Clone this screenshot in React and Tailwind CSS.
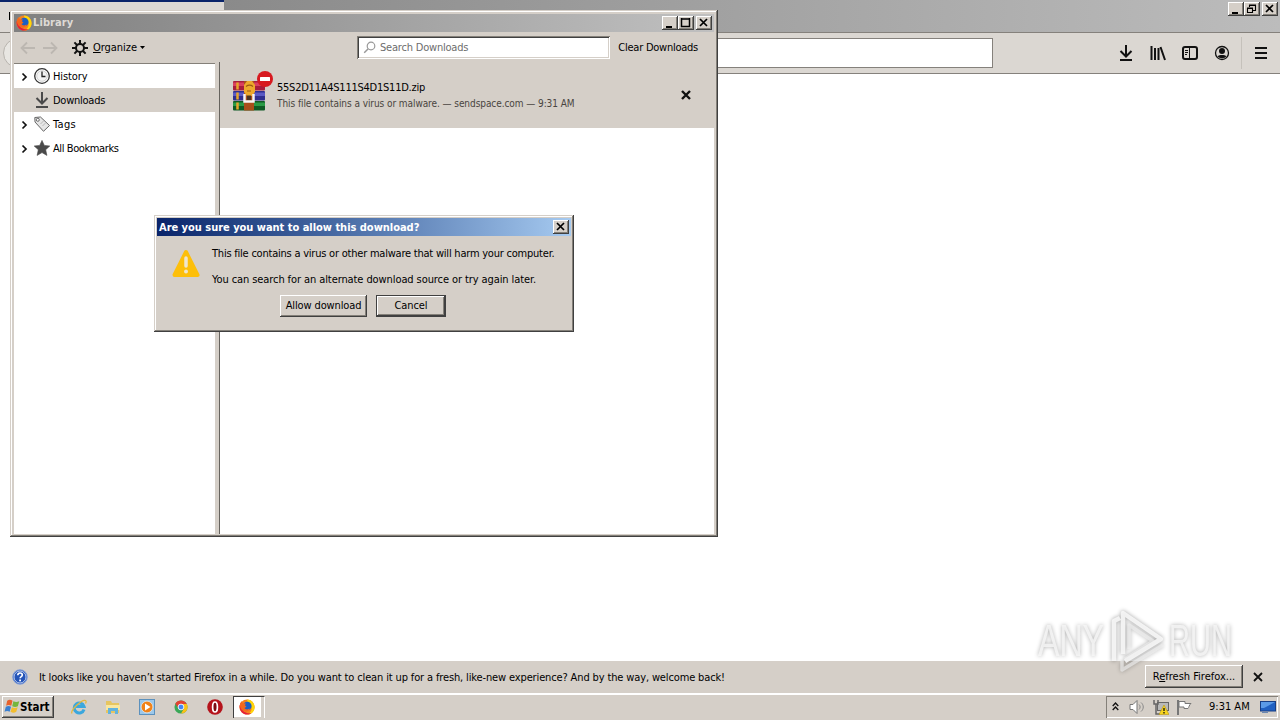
import { clsx } from 'clsx';

const RAISED = 'bg-[#d5cfc8] shadow-[inset_-1px_-1px_#404040,inset_1px_1px_#ffffff,inset_-2px_-2px_#848079]';

function FirefoxIcon({ size = 16 }) {
  return (
    <svg width={size} height={size} viewBox="0 0 16 16" className="shrink-0">
      <circle cx="8" cy="8" r="7.6" fill="#f5821f" />
      <path d="M8 .4C13 .6 16 4.500 15.600 9c-.6 4.500-4 6.600-7.600 6.600 4-1.600 5.500-5 4-8.600C11 4.500 8 3.500 8 .4z" fill="#ffd60a" />
      <path d="M.6 6C0 11 3.500 15.600 8 15.600c2 0 3.500-.6 4.500-1.600C8 15 3 13 2.500 8z" fill="#e5203a" />
      <circle cx="8.300" cy="7" r="4.300" fill="#1c5fc4" />
      <path d="M1 4.500 2.500 2.200l1.400 2 3 .4-1 1.700 1.600 1.500-2 1.200c.6 1.600 3.500 1.900 5.300.6-.8 3-3.800 4-6.300 2.500C1.500 10.500.5 7.500 1 4.500z" fill="#f4681d" />
    </svg>
  );
}

function ArrowIcon({ flip }) {
  return (
    <svg width="16" height="14" viewBox="0 0 16 14" className={clsx('shrink-0', flip && 'rotate-180')}>
      <path d="M7 1.500 1.500 7 7 12.500M1.500 7H15" fill="none" stroke="#bcb7b1" strokeWidth="1.800" />
    </svg>
  );
}

function GearIcon() {
  return (
    <svg width="16" height="16" viewBox="0 0 16 16" className="shrink-0">
      <circle cx="8" cy="8" r="4" fill="none" stroke="#111" strokeWidth="2" />
      <path d="M8 0v4M8 12v4M0 8h4M12 8h4M2.400 2.400l2.600 2.600M11 11l2.600 2.600M13.600 2.400 11 5M5 11l-2.600 2.600" stroke="#111" strokeWidth="2" />
    </svg>
  );
}

function DownloadIcon({ color = '#111' }) {
  return (
    <svg width="16" height="16" viewBox="0 0 16 16" className="shrink-0">
      <path d="M8 0v11M2.500 6 8 11.500 13.500 6" fill="none" stroke={color} strokeWidth="2" />
      <path d="M2 15h12" stroke={color} strokeWidth="2" />
    </svg>
  );
}

function ClockIcon() {
  return (
    <svg width="16" height="16" viewBox="0 0 16 16" className="shrink-0">
      <circle cx="8" cy="8" r="7.300" fill="#fff" stroke="#333" strokeWidth="1.300" />
      <circle cx="8" cy="8" r="5.300" fill="#f4f4f4" stroke="#aaa" strokeWidth=".5" />
      <path d="M8 3.500V8.500h3.500" fill="none" stroke="#222" strokeWidth="1.300" />
    </svg>
  );
}

function TagIcon() {
  return (
    <svg width="16" height="16" viewBox="0 0 16 16" className="shrink-0">
      <path d="M.8 1.500 1 6l8.500 9.300 6-5.800L6.500 1z" fill="#e6e6e6" stroke="#666" strokeLinejoin="round" />
      <circle cx="3.800" cy="3.800" r="1.500" fill="#fff" stroke="#666" />
      <path d="m6.500 8 3-3M8.500 10l3-3" stroke="#aaa" strokeWidth=".8" />
    </svg>
  );
}

function StarIcon() {
  return (
    <svg width="16" height="16" viewBox="0 0 16 16" className="shrink-0">
      <path d="m8 .4 2.300 5 5.500.6-4.100 3.700 1.200 5.700L8 12.600l-4.900 2.800 1.200-5.700L.2 6l5.500-.6z" fill="#4a4a4a" stroke="#4a4a4a" strokeWidth=".6" strokeLinejoin="round" />
    </svg>
  );
}

function CrossIcon({ size = 10, width = 2.4 }) {
  return (
    <svg width={size} height={size} viewBox="0 0 10 10">
      <path d="m1 1 8 8M9 1 1 9" stroke="#111" strokeWidth={width} />
    </svg>
  );
}

function ArchiveIcon() {
  return (
    <svg width="32" height="31" viewBox="0 0 32 31">
      <rect y="1" width="32" height="9.500" rx="1" fill="#a81d3c" />
      <rect y="2.500" width="32" height="3.500" fill="#d9405f" />
      <rect y="11" width="32" height="9.500" rx="1" fill="#2f2f8f" />
      <rect y="12.500" width="32" height="3.500" fill="#5a5ac4" />
      <rect y="21" width="32" height="9.500" rx="1" fill="#0f5a24" />
      <rect y="22.500" width="32" height="3.500" fill="#2a9a45" />
      <path d="M4.500 2.500v7M4.500 12.500v7M4.500 22.500v7" stroke="#e6a52b" strokeWidth="2.500" />
      <rect x="11" y="1" width="10" height="29.500" fill="#a94e1b" />
      <path d="M11 12V5l3-4h5l3 4v7l-3 4h-5z" fill="#eda92c" />
      <path d="M13 6.500c2-1.500 5-1.500 7 0M14 11h4" fill="none" stroke="#9c5a10" strokeWidth="1.200" />
      <path d="M11.500 14v7.500h9V14" fill="none" stroke="#f5f5f5" strokeWidth="2.500" />
      <rect x="14" y="15.500" width="4" height="4.500" fill="#4a3525" />
    </svg>
  );
}

function WindowGlyph({ type }) {
  return (
    <svg width="16" height="14" viewBox="0 0 16 14">
      {type === 'min' && <path d="M4 10h6v2H4z" fill="#000" />}
      {type === 'max' && <path d="M3.500 2v8.500h8V2M3 3h9" fill="none" stroke="#000" strokeWidth="1.500" />}
      {type === 'restore' && (
        <path d="M5.500 5V3.500h6v5H9M5 3h7M3.500 6.500h5v4h-5zM3 6h6" fill="none" stroke="#000" strokeWidth="1.100" />
      )}
      {type === 'close' && <path d="m4 3 7 7M11 3l-7 7" stroke="#000" strokeWidth="1.700" />}
    </svg>
  );
}

function WindowButton({ type }) {
  return (
    <button className={clsx('w-4 h-3.5 block', RAISED)}>
      <WindowGlyph type={type} />
    </button>
  );
}

const tree = [
  { label: 'History', icon: ClockIcon, open: true, style: 'tracking-[-0.1px]' },
  { label: 'Downloads', icon: () => <DownloadIcon color="#4a4a4a" />, active: true, style: 'tracking-[-0.25px]' },
  { label: 'Tags', icon: TagIcon, open: true, style: 'tracking-[0.3px]' },
  { label: 'All Bookmarks', icon: StarIcon, open: true, style: 'tracking-[-0.4px]' },
];

function BrowserWindow() {
  return (
    <div className="h-[661px] flex flex-col">
      <div className="h-8 flex bg-linear-to-r from-[#808080] to-[#bcbcbc]">
        <div className="w-56 border-t-2 border-[#0a246a] bg-[#dcd8d4]">
          <div className="w-px h-2 ml-[9px] mt-2.5 bg-black" />
        </div>
        <div className="flex-1 flex justify-end pt-0.5 pr-0.5">
          <WindowButton type="min" />
          <WindowButton type="restore" />
          <div className="w-0.5" />
          <WindowButton type="close" />
        </div>
      </div>
      <div className="h-[42px] flex items-center border-y border-[#85817c] bg-[#dbd7d2]">
        <div className="ml-[3px] size-[30px] rounded-full border border-[#b8b4ae] bg-[#e8e6e2]" />
        <div className="w-[860px] ml-[100px] h-[30px] border border-[#85817c] bg-white" />
        <div className="flex items-center gap-4 ml-[125px]">
          <DownloadIcon />
          <svg width="16" height="16" viewBox="0 0 16 16">
            <path d="M1.500 1v14M5 3v12M8.500 3v12M10.500 2l4.500 13" stroke="#111" strokeWidth="2" />
          </svg>
          <svg width="16" height="16" viewBox="0 0 16 16">
            <rect x="1" y="2" width="14" height="12" rx="2" fill="none" stroke="#111" strokeWidth="2" />
            <path d="M7.500 2v12" stroke="#111" />
            <path d="M3 5.500h3M3 7.500h3M3 9.500h2" stroke="#111" />
          </svg>
          <svg width="16" height="16" viewBox="0 0 16 16">
            <circle cx="8" cy="8" r="6.500" fill="none" stroke="#111" strokeWidth="1.300" />
            <circle cx="8" cy="6" r="3" fill="#111" />
            <path d="M3.500 11c2-1.500 7-1.500 9 0-1.500 3-7.500 3-9 0z" fill="#111" />
          </svg>
        </div>
        <div className="w-px h-8 ml-[11px] bg-[#c5c1bb]" />
        <svg width="12" height="14" viewBox="0 0 12 14" className="ml-[13px]">
          <path d="M0 2h12M0 7h12M0 12h12" stroke="#111" strokeWidth="2" />
        </svg>
      </div>
      <div className="flex-1 bg-white" />
    </div>
  );
}

function LibraryWindow() {
  return (
    <div className="absolute left-2.5 top-2.5 w-[708px] h-[527px] p-1 pr-[3px] pb-[3px] flex flex-col bg-[#d5cfc8] shadow-[inset_-1px_-1px_#404040,inset_1px_1px_#d5cfc8,inset_-2px_-2px_#848079,inset_2px_2px_#ffffff]">
      <div className="h-[18px] flex items-center pl-0.5 pr-0.5 mr-px bg-linear-to-r from-[#808080] to-[#c0c0c0]">
        <FirefoxIcon />
        <span className="ml-px text-[#dedad5] font-bold tracking-[0.1px]">Library</span>
        <div className="ml-auto flex">
          <WindowButton type="min" />
          <WindowButton type="max" />
          <div className="w-0.5" />
          <WindowButton type="close" />
        </div>
      </div>
      <div className="h-[30px] flex items-center pl-1.5 pt-0.5">
        <ArrowIcon />
        <div className="w-1.5" />
        <ArrowIcon flip />
        <div className="w-3.5" />
        <GearIcon />
        <span className="ml-[5px] tracking-[-0.05px]"><span className="underline">O</span>rganize</span>
        <svg width="5" height="3" viewBox="0 0 5 3" className="ml-[3px] mb-0.5"><path d="M0 0h5L2.500 3z" fill="#000" /></svg>
        <div className="absolute left-[347px] top-[26px] w-[253px] h-[23px] flex items-center pl-1.5 pt-px bg-white text-[#6d6d6d] shadow-[inset_1px_1px_#848079,inset_-1px_-1px_#ffffff,inset_2px_2px_#404040,inset_-2px_-2px_#d5cfc8]">
          <svg width="13" height="13" viewBox="0 0 13 13" className="mb-0.5">
            <circle cx="8" cy="5" r="3.800" fill="none" stroke="#999" strokeWidth="1.200" />
            <path d="m5.200 7.800-4 4" stroke="#999" strokeWidth="1.500" />
          </svg>
          <span className="ml-1 tracking-[-0.2px]">Search Downloads</span>
        </div>
        <span className="ml-auto mr-[17px] tracking-[-0.25px]">Clear Downloads</span>
      </div>
      <div className="flex-1 flex">
        <div className="w-[201px] mt-px border-t border-[#848079] bg-white">
          {tree.map((t) => (
            <div key={t.label} className={clsx('h-6 flex items-center pl-[7px]', t.active && 'bg-[#d5cfc8]')}>
              <svg width="7" height="10" viewBox="0 0 7 10" className="mr-1.5 mt-px shrink-0">
                {t.open && <path d="m1.500 1.500 3.500 3.500-3.500 3.500" fill="none" stroke="#111" strokeWidth="1.700" />}
              </svg>
              <t.icon />
              <span className={clsx('ml-[3px] pt-0.5', t.style)}>{t.label}</span>
            </div>
          ))}
        </div>
        <div className="w-[5px] border-r border-[#66635e] bg-[#d5cfc8]" />
        <div className="flex-1 mr-px bg-white">
          <div className="relative h-[66px] flex items-center bg-[#d5cfc8]">
            <div className="ml-[13px]"><ArchiveIcon /></div>
            <svg width="16" height="16" viewBox="0 0 16 16" className="absolute left-[37px] top-[9px]">
              <circle cx="8" cy="8" r="8" fill="#d7191f" />
              <rect x="3" y="6" width="10" height="4" rx=".5" fill="#fff" />
            </svg>
            <div className="ml-3 pt-0.5 leading-4">
              <p className="tracking-[-0.24px]">55S2D11A4S111S4D1S11D.zip</p>
              <p className="text-[10px] text-[#494541] tracking-[-0.07px]">This file contains a virus or malware. — sendspace.com — 9:31 AM</p>
            </div>
            <div className="ml-auto mr-[23px]"><CrossIcon /></div>
          </div>
        </div>
      </div>
    </div>
  );
}

function ConfirmDialog() {
  return (
    <div className="absolute left-[154px] top-[215px] w-[420px] h-[117px] p-[3px] bg-[#d5cfc8] shadow-[inset_-1px_-1px_#404040,inset_1px_1px_#d5cfc8,inset_-2px_-2px_#848079,inset_2px_2px_#ffffff]">
      <div className="h-[18px] flex items-center justify-between pl-0.5 pr-0.5 bg-linear-to-r from-[#0a246a] to-[#a6caf0]">
        <span className="text-white font-bold pt-px tracking-[-0.02px]">Are you sure you want to allow this download?</span>
        <WindowButton type="close" />
      </div>
      <div className="flex pt-2.5">
        <svg width="30" height="30" viewBox="0 0 30 30" className="ml-3.5 mt-[3px]">
          <path d="M15 3 26.500 26h-23z" fill="#fdbf0a" stroke="#fdbf0a" strokeWidth="4" strokeLinejoin="round" />
          <path d="M15 9v8" stroke="#efe6cf" strokeWidth="3.500" strokeLinecap="round" />
          <circle cx="15" cy="22.500" r="2" fill="#efe6cf" />
        </svg>
        <div className="ml-[11px] leading-4 space-y-2.5">
          <p className="tracking-[-0.22px]">This file contains a virus or other malware that will harm your computer.</p>
          <p className="tracking-[-0.09px]">You can search for an alternate download source or try again later.</p>
        </div>
      </div>
      <div className="flex gap-[9px] pl-[123px] pt-[7px]">
        <button className={clsx('w-[87px] h-[22px] tracking-[-0.13px]', RAISED)}>Allow download</button>
        <button className="w-[70px] h-[22px] border border-[#404040] bg-[#d5cfc8] shadow-[inset_-1px_-1px_#404040,inset_1px_1px_#ffffff,inset_-2px_-2px_#848079] tracking-[-0.1px]">Cancel</button>
      </div>
    </div>
  );
}

function NotificationBar() {
  return (
    <div className="h-8 flex items-center pl-3 bg-[#d5cfc8]">
      <svg width="16" height="16" viewBox="0 0 16 16">
        <circle cx="8" cy="8" r="7.300" fill="#2454b8" stroke="#8aa4d8" />
        <circle cx="8" cy="8" r="6" fill="none" stroke="#dfe8fa" strokeWidth=".8" />
        <path d="M5.800 6.300c0-3.200 4.500-2.900 4.500-.3 0 1.600-2.200 1.600-2.200 3.300" fill="none" stroke="#fff" strokeWidth="1.600" />
        <rect x="7.200" y="10.500" width="1.800" height="1.800" fill="#fff" />
      </svg>
      <span className="ml-[11px] pt-px tracking-[-0.135px]">
        It looks like you haven’t started Firefox in a while. Do you want to clean it up for a fresh, like-new experience? And by the way, welcome back!
      </span>
      <button className={clsx('ml-auto w-[98px] h-[23px] -mt-0.5 pt-px', RAISED)}>
        R<span className="underline">e</span>fresh Firefox...
      </button>
      <div className="ml-2.5 mr-[17px]"><CrossIcon width={1.8} /></div>
    </div>
  );
}

function Taskbar() {
  return (
    <div className="h-[27px] flex items-center bg-[#d5cfc8] shadow-[inset_0_2px_#ffffff,inset_0_1px_#d5cfc8]">
      <button className={clsx('ml-0.5 w-[52px] h-[22px] flex items-center pl-0.5 font-bold', RAISED)}>
        <svg width="16" height="15" viewBox="0 0 15 14" className="shrink-0">
          <path d="M3 1.500c2-1.200 3.500-.8 5 .2L6.800 6.300C5 5.300 3.700 5.300 2 6.200z" fill="#e8622c" />
          <path d="M8.800 2.100c2 1 3.500 1 5.500 0L13 6.800c-2 1-3.500.8-5.300-.1z" fill="#75b63c" />
          <path d="M1.700 7.200c2-1 3.300-.9 4.900 0L5.300 12C3.700 11 2.300 11 .5 12z" fill="#3a7fd0" />
          <path d="M7.400 7.600c2 1 3.500.9 5.400 0L11.500 12c-2 1.200-3.500 1-5.400 0z" fill="#f3bd2d" />
        </svg>
        <span className="text-[11.5px]">Start</span>
      </button>
      <div className="flex items-center gap-[18px] ml-[17px]">
        <svg width="16" height="16" viewBox="0 0 16 16">
          <path d="M13 10.500A5 5 0 1 1 13 7.500H5" fill="none" stroke="#3ba7dd" strokeWidth="3" />
          <path d="M1 14.500c-2-3 10-14.500 13.500-13 1 .5.600 2 0 3" fill="none" stroke="#e5b83b" strokeWidth="1.300" />
        </svg>
        <svg width="16" height="16" viewBox="0 0 16 16">
          <path d="M1 2h5l1 2h7v10H1z" fill="#e6c560" />
          <path d="M1 6h14v5H1z" fill="#f9e79f" />
          <path d="M3 15V9h10v6h-3v-3H6v3z" fill="#62b3de" />
        </svg>
        <svg width="16" height="16" viewBox="0 0 16 16">
          <rect x=".5" y=".5" width="15" height="15" fill="#9cc8ea" stroke="#5c91bd" />
          <circle cx="8" cy="8" r="5.800" fill="#f08218" stroke="#fff" strokeWidth=".5" />
          <path d="m6 4.500 5.500 3.500L6 11.500z" fill="#fff" />
        </svg>
        <svg width="14" height="14" viewBox="0 0 16 16" className="mx-px">
          <circle cx="8" cy="8" r="7.500" fill="#3aa757" />
          <path d="M1.500 4.200a7.500 7.500 0 0 1 13 .3H8L5 9z" fill="#e34133" />
          <path d="M14.700 4.500A7.500 7.500 0 0 1 8 15.500l3.500-6L8 4.500z" fill="#fbc116" />
          <circle cx="8" cy="8" r="3.300" fill="#4285f4" stroke="#fff" />
        </svg>
        <svg width="16" height="16" viewBox="0 0 16 16">
          <circle cx="8" cy="8" r="7.800" fill="#b5131b" />
          <ellipse cx="8" cy="8" rx="2.400" ry="5" fill="#7c0c12" stroke="#fff" strokeWidth="1.700" />
        </svg>
      </div>
      <div className="ml-2.5 w-[29px] h-[22px] flex items-center pl-1.5 bg-white shadow-[inset_1px_1px_#404040,inset_-1px_-1px_#d5cfc8]">
        <FirefoxIcon />
      </div>
      <div className="w-[3px] h-[22px] border-r border-white border-t border-t-[#404040] bg-[#d5cfc8]" />
      <div className="ml-auto mr-0.5 w-[172px] h-[22px] flex items-center pl-1.5 shadow-[inset_1px_1px_#848079,inset_-1px_-1px_#ffffff]">
        <svg width="7" height="9" viewBox="0 0 7 9">
          <path d="m.7 4 2.800-3 2.800 3M.7 8l2.800-3 2.800 3" fill="none" stroke="#111" strokeWidth="1.300" />
        </svg>
        <svg width="16" height="16" viewBox="0 0 16 16" className="ml-2.5">
          <path d="M1 5.500h3l4-4v13l-4-4H1z" fill="#fff" stroke="#777" />
          <path d="M10 5.500c1.500 1.500 1.500 3.500 0 5M12 3.500c3 2.500 3 6.500 0 9" fill="none" stroke="#888" />
        </svg>
        <svg width="16" height="16" viewBox="0 0 16 16" className="ml-2">
          <rect x="4.500" y="3.500" width="11" height="8" fill="#b9b9b9" stroke="#666" />
          <path d="M1 1v4h4V1M3 5v10h4" fill="none" stroke="#666" strokeWidth="1.500" />
          <path d="m11 6 5 9.500H6z" fill="#f8d51d" stroke="#b99613" strokeWidth=".6" />
          <path d="M11 9v3M11 13v1.500" stroke="#111" strokeWidth="1.300" />
        </svg>
        <svg width="16" height="16" viewBox="0 0 16 16" className="ml-[7px]">
          <path d="M2 1v15" stroke="#777" strokeWidth="2" />
          <path d="M3 2.500h6v2h6c-2 1.500-2 4-3 5H8V8H3z" fill="#fff" stroke="#777" />
        </svg>
        <span className="ml-[17px] pt-px">9:31 AM</span>
        <svg width="16" height="14" viewBox="0 0 16 14" className="ml-auto mr-0.5 shrink-0">
          <rect x=".5" y="1.500" width="15" height="9.500" fill="#2161c2" stroke="#183f85" />
          <path d="M1 2h14L4 8H1z" fill="#5b9be8" />
          <path d="M2 12.500h6" stroke="#6b88b0" />
        </svg>
      </div>
    </div>
  );
}

function Watermark() {
  return (
    <div className="absolute left-[1038px] top-[608px] w-[194px] h-[66px] flex items-center justify-between text-[44px] leading-none text-[#f7f7f7]/80 font-['Liberation_Sans',sans-serif] [filter:drop-shadow(0_0_2px_rgba(0,0,0,0.4))]">
      <span className="w-[68px] shrink-0"><span className="inline-block origin-left scale-x-[0.73]">ANY</span></span>
      <svg width="58" height="66" viewBox="0 0 58 66" className="shrink-0">
        <path d="M5 53V13l6-3M14 46V5l38 26-36 22" fill="none" stroke="#f7f7f7" strokeOpacity=".9" strokeWidth="4.500" strokeLinejoin="round" />
        <path d="M20 41V17l24 16-28 18M13 53v9l41-25" fill="none" stroke="#f0f0f0" strokeOpacity=".65" strokeWidth="3.500" strokeLinejoin="round" />
      </svg>
      <span className="w-[63px] shrink-0"><span className="inline-block origin-left scale-x-[0.66]">RUN</span></span>
    </div>
  );
}

export default function App() {
  return (
    <div className="relative w-[1280px] h-[720px] overflow-hidden bg-white text-black text-[11px] leading-[14px] whitespace-nowrap font-['DejaVu_Sans_Condensed','DejaVu_Sans',sans-serif]">
      <BrowserWindow />
      <NotificationBar />
      <Taskbar />
      <LibraryWindow />
      <ConfirmDialog />
      <Watermark />
    </div>
  );
}
